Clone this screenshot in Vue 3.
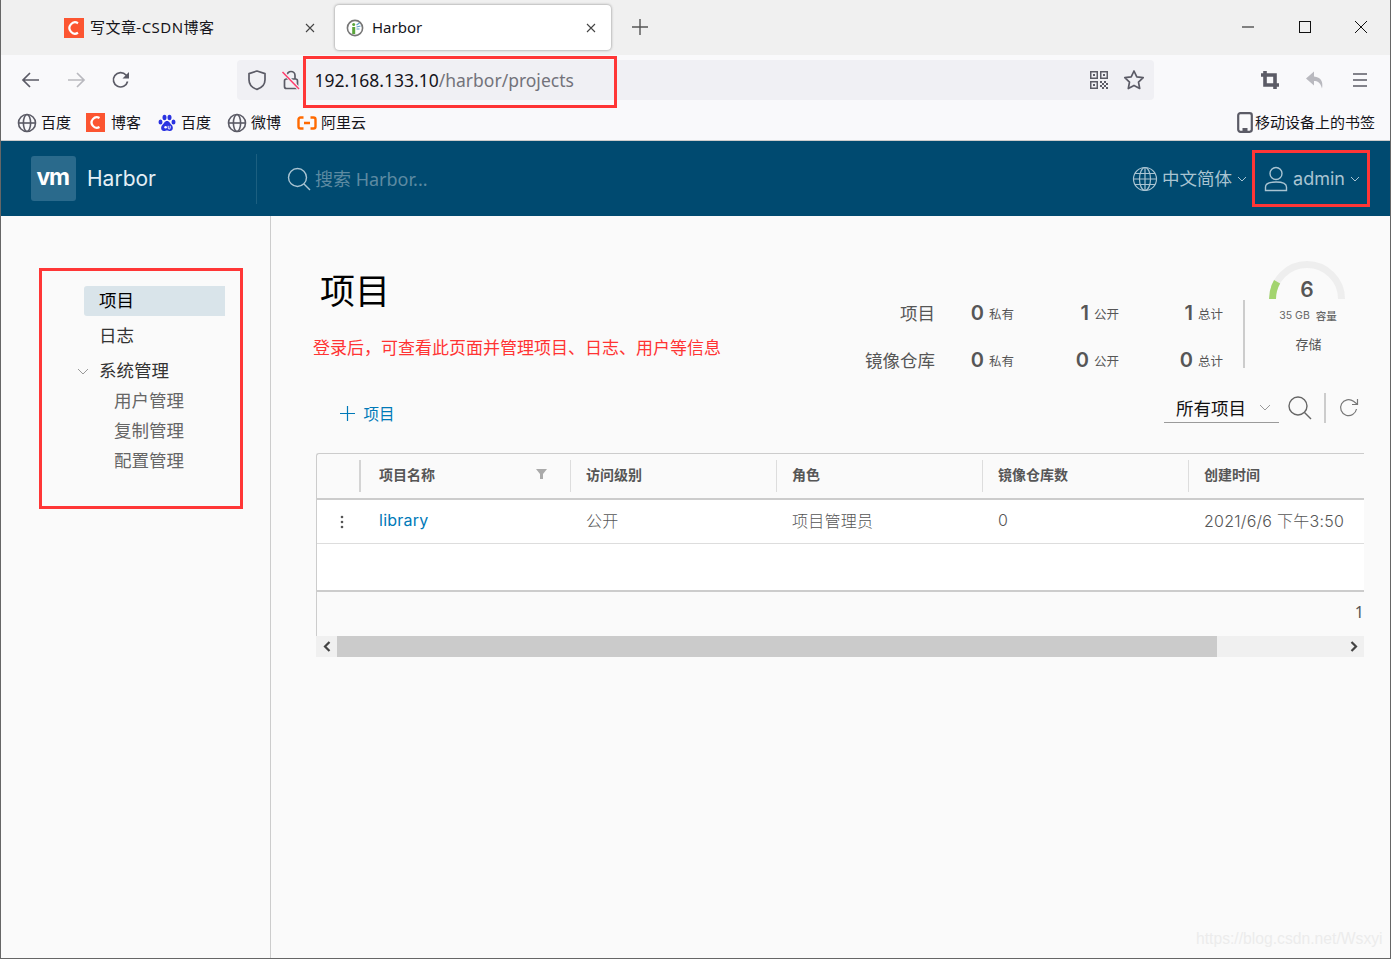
<script setup>
const bookmarks = [
  { icon: 'globe', label: '百度' },
  { icon: 'csdn', label: '博客' },
  { icon: 'paw', label: '百度' },
  { icon: 'globe', label: '微博' },
  { icon: 'ali', label: '阿里云' }
]

const stats = [
  { label: '项目', values: ['0', '1', '1'] },
  { label: '镜像仓库', values: ['0', '0', '0'] }
]
const statNames = ['私有', '公开', '总计']

const columns = ['项目名称', '访问级别', '角色', '镜像仓库数', '创建时间']
const row = ['library', '公开', '项目管理员', '0', '2021/6/6 下午3:50']
</script>

<template>
  <div class="window">
    <!-- browser chrome -->
    <div class="tabstrip">
      <div class="tab">
        <svg class="fav" width="20" height="20" viewBox="0 0 20 20">
          <rect width="20" height="20" fill="#fc5531" />
          <path d="M14 5.2a5.6 5.6 0 1 0 0 9.6" fill="none" stroke="#fff" stroke-width="2.2" />
        </svg>
        <span class="tab-title wide">写文章-CSDN博客</span>
        <svg class="tab-x" width="12" height="12" viewBox="0 0 12 12"><path d="M2 2l8 8M10 2l-8 8" stroke="#444" stroke-width="1.1" /></svg>
      </div>
      <div class="tab active">
        <svg class="fav" width="18" height="18" viewBox="0 0 18 18">
          <circle cx="9" cy="9" r="7.6" fill="#fff" stroke="#777" stroke-width="1.6" />
          <rect x="6.2" y="8" width="3" height="7" fill="#5aa63c" />
          <circle cx="7.7" cy="5.6" r="1.5" fill="#5aa63c" />
          <path d="M10.5 6l3-2M10.5 8l4-1M10.5 10l3 0" stroke="#5a9fc8" stroke-width="1.1" />
        </svg>
        <span class="tab-title">Harbor</span>
        <svg class="tab-x" width="12" height="12" viewBox="0 0 12 12"><path d="M2 2l8 8M10 2l-8 8" stroke="#444" stroke-width="1.1" /></svg>
      </div>
      <svg class="new-tab" width="16" height="16" viewBox="0 0 16 16"><path d="M8 0v16M0 8h16" stroke="#555" stroke-width="1.4" /></svg>
      <div class="win-btns">
        <span class="win-btn"><svg width="14" height="14" viewBox="0 0 14 14"><path d="M1 7h12" stroke="#111" stroke-width="1" /></svg></span>
        <span class="win-btn"><svg width="14" height="14" viewBox="0 0 14 14"><rect x="1.5" y="1.5" width="11" height="11" fill="none" stroke="#111" stroke-width="1" /></svg></span>
        <span class="win-btn"><svg width="14" height="14" viewBox="0 0 14 14"><path d="M1 1l12 12M13 1L1 13" stroke="#111" stroke-width="1" /></svg></span>
      </div>
    </div>

    <div class="toolbar">
      <span class="tool"><svg width="20" height="20" viewBox="0 0 20 20"><path d="M18 10H2.5M9 3l-7 7 7 7" fill="none" stroke="#5b5b66" stroke-width="1.7" /></svg></span>
      <span class="tool"><svg width="20" height="20" viewBox="0 0 20 20"><path d="M2 10h15.5M11 3l7 7-7 7" fill="none" stroke="#b9b9bf" stroke-width="1.7" /></svg></span>
      <span class="tool"><svg width="20" height="20" viewBox="0 0 20 20"><path d="M16.6 11.5A7.2 7.2 0 1 1 15 5l2 2.2" fill="none" stroke="#5b5b66" stroke-width="1.7" /><path d="M18 2v6.5h-6.5z" fill="#5b5b66" /></svg></span>
      <div class="urlbar">
        <span class="url-ico"><svg width="20" height="22" viewBox="0 0 20 22"><path d="M10 2l8 2.6v6.2c0 5-3.6 8.2-8 9.6-4.4-1.4-8-4.6-8-9.6V4.6z" fill="none" stroke="#5b5b66" stroke-width="1.7" stroke-linejoin="round" /></svg></span>
        <span class="url-ico lock">
          <svg width="20" height="22" viewBox="0 0 20 22">
            <path d="M6 10V6.500a4 4 0 0 1 8 0V10" fill="none" stroke="#5b5b66" stroke-width="1.7" />
            <rect x="3.5" y="10" width="13" height="9.5" rx="2" fill="none" stroke="#5b5b66" stroke-width="1.7" />
            <path d="M2 3l16 17" stroke="#f0f0f4" stroke-width="3.4" />
            <path d="M1.500 3l16.500 17" stroke="#ff3b6b" stroke-width="1.5" />
          </svg>
        </span>
        <span class="url"><b>192.168.133.10</b>/harbor/projects</span>
        <span class="url-ico qr">
          <svg width="20" height="20" viewBox="0 0 20 20" fill="#5b5b66">
            <path d="M1 1h8v8H1zM2.500 2.500v5h5v-5zM11 1h8v8h-8zM12.500 2.500v5h5v-5zM1 11h8v8H1zM2.500 12.500v5h5v-5z" fill-rule="evenodd" />
            <rect x="4" y="4" width="2" height="2" /><rect x="14" y="4" width="2" height="2" /><rect x="4" y="14" width="2" height="2" />
            <rect x="11" y="11" width="2" height="2" /><rect x="15" y="11" width="2" height="2" /><rect x="13" y="13" width="2" height="2" /><rect x="17" y="13" width="2" height="2" />
            <rect x="11" y="15" width="2" height="2" /><rect x="15" y="15" width="2" height="2" /><rect x="13" y="17" width="2" height="2" /><rect x="17" y="17" width="2" height="2" />
          </svg>
        </span>
        <span class="url-ico star"><svg width="22" height="22" viewBox="0 0 22 22"><path d="M11 2l2.800 5.900 6.400.8-4.700 4.400 1.200 6.400L11 16.400l-5.700 3.100 1.200-6.400-4.700-4.400 6.400-.8z" fill="none" stroke="#5b5b66" stroke-width="1.7" stroke-linejoin="round" /></svg></span>
      </div>
      <span class="tool crop"><svg width="20" height="20" viewBox="0 0 20 20"><path d="M5 1v14h14M1 5h14v14" fill="none" stroke="#5b5b66" stroke-width="3.6" /></svg></span>
      <span class="tool"><svg width="20" height="20" viewBox="0 0 20 20"><path d="M9 1.500L1 8.500 9 15.500v-4.500c3.500 0 6.500 1.500 8 7.500 1.500-6.500-1-11.500-8-12z" fill="#b9b9bf" /></svg></span>
      <span class="tool"><svg width="20" height="20" viewBox="0 0 20 20"><path d="M3 4h14M3 10h14M3 16h14" stroke="#5b5b66" stroke-width="1.7" /></svg></span>
    </div>

    <div class="bookmarks">
      <span v-for="(b, i) in bookmarks" :key="i" class="bm">
        <svg v-if="b.icon === 'globe'" width="20" height="20" viewBox="0 0 20 20" fill="none" stroke="#5b5b66" stroke-width="1.6">
          <circle cx="10" cy="10" r="8.5" /><ellipse cx="10" cy="10" rx="3.6" ry="8.5" /><path d="M1.500 10h17" />
        </svg>
        <svg v-else-if="b.icon === 'csdn'" class="bm-csdn" width="19" height="19" viewBox="0 0 19 19">
          <rect width="19" height="19" fill="#fc5531" />
          <path d="M13.500 5a5.200 5.200 0 1 0 0 9" fill="none" stroke="#fff" stroke-width="2.2" />
        </svg>
        <svg v-else-if="b.icon === 'paw'" width="20" height="20" viewBox="0 0 20 20" fill="#2932e1">
          <ellipse cx="3.500" cy="9" rx="2" ry="2.6" /><ellipse cx="7.500" cy="4.500" rx="2" ry="2.8" /><ellipse cx="12.500" cy="4.500" rx="2" ry="2.8" /><ellipse cx="16.500" cy="9" rx="2" ry="2.6" />
          <path d="M10 8c-2.500 0-3 2.500-4.500 3.800C3.500 13.500 3.500 18 7 18c1.200 0 2-.5 3-.5s1.800.5 3 .5c3.500 0 3.500-4.500 1.500-6.200C13 10.500 12.500 8 10 8z" />
          <circle cx="8.600" cy="14.200" r="1.300" fill="#fff" /><path d="M11.200 12.800v2.200a1 1 0 0 0 2 0v-2.200" fill="none" stroke="#fff" stroke-width=".9" />
        </svg>
        <svg v-else width="20" height="20" viewBox="0 0 20 20" fill="none" stroke="#ff6a00" stroke-width="2.4">
          <path d="M6.500 4.500H3.500a2 2 0 0 0-2 2v7a2 2 0 0 0 2 2h3M13.500 4.500h3a2 2 0 0 1 2 2v7a2 2 0 0 1-2 2h-3M7 10h6" />
        </svg>
        <span class="bm-text">{{ b.label }}</span>
      </span>
      <span class="bm mobile">
        <svg width="16" height="21" viewBox="0 0 16 21"><rect x="1.2" y="1.2" width="13.6" height="18.6" rx="2.2" fill="none" stroke="#5b5b66" stroke-width="2.2" /><rect x="5.500" y="16" width="5" height="3" fill="#5b5b66" /></svg>
        <span class="bm-text">移动设备上的书签</span>
      </span>
    </div>

    <!-- harbor header -->
    <header class="hdr">
      <div class="brand">
        <span class="logo">vm</span>
        <span class="brand-name">Harbor</span>
      </div>
      <div class="hdr-search">
        <svg width="24" height="24" viewBox="0 0 24 24" fill="none" stroke="#a9c4d2" stroke-width="1.4"><circle cx="10.500" cy="10.500" r="9" /><path d="M17 17l6 6" /></svg>
        <span class="up">搜索 Harbor...</span>
      </div>
      <div class="hdr-right">
        <svg width="26" height="26" viewBox="0 0 26 26" fill="none" stroke="#a9c4d2" stroke-width="1.2"><circle cx="13" cy="13" r="11.500" /><ellipse cx="13" cy="13" rx="5.500" ry="11.500" /><path d="M13 1.500v23M1.500 13h23M3 7.500h20M3 18.500h20" /></svg>
        <span class="hdr-lang up">中文简体</span>
        <svg class="hdr-chev" width="10" height="6" viewBox="0 0 10 6"><path d="M1 1l4 4 4-4" fill="none" stroke="#a9c4d2" stroke-width="1" /></svg>
        <svg class="hdr-user" width="24" height="26" viewBox="0 0 24 26" fill="none" stroke="#a9c4d2" stroke-width="1.4"><circle cx="12" cy="7.500" r="6" /><path d="M1.500 24.500v-3.500c0-3 3.500-5 10.500-5s10.500 2 10.500 5v3.500z" /></svg>
        <span class="hdr-name">admin</span>
        <svg class="hdr-chev" width="10" height="6" viewBox="0 0 10 6"><path d="M1 1l4 4 4-4" fill="none" stroke="#a9c4d2" stroke-width="1" /></svg>
      </div>
    </header>

    <div class="body">
      <aside class="side">
        <div class="nav-item on">项目</div>
        <div class="nav-item log">日志</div>
        <div class="nav-item group">
          <svg width="12" height="8" viewBox="0 0 12 8"><path d="M1 1l5 5 5-5" fill="none" stroke="#999" stroke-width="1" /></svg>
          系统管理
        </div>
        <div class="nav-sub">用户管理</div>
        <div class="nav-sub">复制管理</div>
        <div class="nav-sub">配置管理</div>
      </aside>

      <main class="main">
        <div class="head">
          <div class="head-left">
            <h1>项目</h1>
            <p class="note">登录后，可查看此页面并管理项目、日志、用户等信息</p>
          </div>
          <div class="stats">
            <template v-for="s in stats" :key="s.label">
              <span class="stat-label">{{ s.label }}</span>
              <span v-for="(v, i) in s.values" :key="i" class="stat-val">
                <b>{{ v }}</b><small>{{ statNames[i] }}</small>
              </span>
            </template>
          </div>
          <div class="storage">
            <div class="gauge">
              <svg width="76" height="38" viewBox="0 0 76 38" fill="none" stroke-width="7">
                <path d="M3.500 38a34.500 34.500 0 0 1 69 0" stroke="#eee" />
                <path d="M3.500 38a34.500 34.500 0 0 1 4.600-17.200" stroke="#a3d46f" />
              </svg>
              <b>6</b>
            </div>
            <div class="cap"><span>35 GB</span><em>容量</em></div>
            <div class="cap2">存储</div>
          </div>
        </div>

        <div class="actions">
          <span class="add">
            <svg width="15" height="15" viewBox="0 0 15 15"><path d="M7.500 0v15M0 7.500h15" stroke="#0079b8" stroke-width="1.2" /></svg>
            项目
          </span>
          <div class="filter">
            <span class="select">
              所有项目
              <svg width="12" height="7" viewBox="0 0 12 7"><path d="M1 1l5 5 5-5" fill="none" stroke="#999" stroke-width="1" /></svg>
            </span>
            <svg class="find" width="24" height="24" viewBox="0 0 24 24" fill="none" stroke="#666" stroke-width="1.4"><circle cx="10" cy="10" r="9" /><path d="M16.500 16.500l6.500 6.500" /></svg>
            <span class="vline"></span>
            <svg class="refresh" width="20" height="20" viewBox="0 0 20 20" fill="none" stroke="#777" stroke-width="1.2"><path d="M17.500 11A8 8 0 1 1 14.500 3.300L18 6" /><path d="M18.500 1v5.500H13" /></svg>
          </div>
        </div>

        <section class="grid">
          <div class="grid-head">
            <div class="th first"></div>
            <div v-for="(c, i) in columns" :key="c" class="th" :class="{ name: i === 0 }">
              <span>{{ c }}</span>
              <svg v-if="i === 0" width="11" height="10" viewBox="0 0 11 10"><path d="M0 0h11L7 5v5H4V5z" fill="#aaa" /></svg>
            </div>
          </div>
          <div class="grid-row">
            <div class="td first"><svg width="4" height="14" viewBox="0 0 4 14" fill="#555"><circle cx="2" cy="2" r="1.300" /><circle cx="2" cy="7" r="1.300" /><circle cx="2" cy="12" r="1.300" /></svg></div>
            <div v-for="(c, i) in row" :key="i" class="td" :class="{ name: i === 0, link: i === 0 }">{{ c }}</div>
          </div>
          <div class="grid-empty"></div>
          <div class="grid-foot"><span>1</span></div>
        </section>
        <div class="hscroll">
          <span class="sbtn"><svg width="8" height="11" viewBox="0 0 8 11"><path d="M6.500 1L2 5.500 6.500 10" fill="none" stroke="#444" stroke-width="2.2" /></svg></span>
          <span class="thumb"></span>
          <span class="sbtn end"><svg width="8" height="11" viewBox="0 0 8 11"><path d="M1.500 1L6 5.500 1.500 10" fill="none" stroke="#444" stroke-width="2.2" /></svg></span>
        </div>
      </main>
    </div>

    <!-- red marks drawn over the screenshot -->
    <span class="mark m-url"></span>
    <span class="mark m-user"></span>
    <span class="mark m-side"></span>
    <span class="watermark">https://blog.csdn.net/Wsxyi</span>
  </div>
</template>

<style>
html, body { margin: 0; padding: 0; background: #fafafa; }
</style>

<style scoped>
.window {
  position: relative;
  box-sizing: border-box;
  width: 1391px;
  height: 959px;
  overflow: hidden;
  display: flex;
  flex-direction: column;
  border: 1px solid #666;
  border-top: none;
  background: #fafafa;
  font-family: "Noto Sans", "Noto Sans CJK SC", sans-serif;
  color: #15141a;
}
svg { display: block; flex: none; }
.up { margin-top: -2px; }

.tabstrip { height: 55px; flex: none; display: flex; align-items: flex-start; background: #f0f0f0; }
.tab {
  box-sizing: border-box;
  width: 272px;
  height: 45px;
  margin: 5px 0 0 62px;
  padding: 0 19px 0 1px;
  display: flex;
  align-items: center;
  font-size: 15px;
}
.tab-title { margin: -2px 0 0 6px; }
.tab-title.wide { letter-spacing: .45px; }
.tab-x { margin-left: auto; }
.tab.active {
  width: 276px;
  margin-left: 0;
  padding: 0 14px 0 11px;
  background: #fff;
  border-radius: 4px;
  box-shadow: 0 0 3px rgba(0, 0, 0, .45);
}
.tab.active .tab-title { margin-left: 8px; }
.new-tab { margin: 19px 0 0 21px; }
.win-btns { margin: 0 .5px 0 auto; display: flex; }
.win-btn { width: 56.5px; height: 54px; display: flex; align-items: center; justify-content: center; }

.toolbar { height: 50px; flex: none; padding-left: 7px; display: flex; align-items: center; background: #f9f9fb; }
.tool { width: 45px; display: flex; justify-content: center; }
.tool.crop { margin-left: 93px; }
.urlbar {
  box-sizing: border-box;
  width: 917px;
  height: 40px;
  margin-left: 94px;
  padding: 0 8px;
  display: flex;
  align-items: center;
  background: #f0f0f4;
  border-radius: 4px;
}
.url-ico { width: 24px; display: flex; justify-content: center; }
.url-ico.lock { margin-left: 10px; }
.url-ico.qr { margin-left: auto; }
.url-ico.star { margin-left: 11px; }
.url { margin-left: 11.5px; font-size: 17.5px; color: #73737b; }
.url b { font-weight: 400; color: #15141a; }

.bookmarks { height: 35px; flex: none; padding-left: 16px; display: flex; align-items: center; gap: 16px; background: #f9f9fb; border-bottom: 1px solid #ccc; font-size: 15px; }
.bm { display: flex; align-items: center; gap: 4px; }
.bm-text { margin-top: -2px; }
.bm-csdn { margin: -1px 2px 0 -1px; }
.bm.mobile { margin-left: auto; margin-right: 15px; gap: 2px; }

.hdr { height: 75px; flex: none; padding-left: 30px; display: flex; align-items: center; background: #004a70; }
.brand { box-sizing: border-box; width: 226px; height: 50px; display: flex; align-items: center; border-right: 1px solid #1c5f80; }
.logo {
  width: 45px;
  height: 45px;
  box-sizing: border-box;
  padding: 0 2px 4px 0;
  display: flex;
  align-items: center;
  justify-content: center;
  background: #2a6a8c;
  border-radius: 3px;
  color: #fff;
  font-family: Inter, sans-serif;
  font-size: 23px;
  font-weight: 700;
  letter-spacing: -1.5px;
}
.brand-name { margin: 0 0 0 11px; font-family: Inter, sans-serif; font-size: 21px; color: #e4eff5; }
.hdr-search { margin-left: 30px; display: flex; align-items: center; gap: 4px; font-size: 18px; color: #5d8aa2; }
.hdr-right { margin-left: auto; display: flex; align-items: center; color: #a9c4d2; font-size: 17.5px; }
.hdr-lang { margin-left: 4px; }
.hdr-chev { margin-left: 5px; }
.hdr-user { margin-left: 17px; }
.hdr-name { margin-left: 5px; font-family: Inter, sans-serif; font-size: 18px; }
.hdr-right > :last-child { margin-right: 30px; }

.body { flex: 1; min-height: 0; display: flex; }
.side { box-sizing: border-box; width: 270px; flex: none; padding: 70px 45px 0 83px; border-right: 1px solid #ccc; font-size: 17.5px; }
.nav-item { height: 30px; line-height: 28px; padding-left: 15px; color: #333; }
.nav-item.on { background: #d9e4ea; border-radius: 3px 0 0 3px; color: #000; }
.nav-item.log { margin-top: 5px; }
.nav-item.group { position: relative; margin-top: 5px; }
.nav-item.group svg { position: absolute; left: -7px; top: 12px; }
.nav-sub { height: 30px; line-height: 28px; padding-left: 30px; color: #666; }

.main { flex: 1; min-width: 0; padding: 45px 26px 0 45px; }
.head { height: 131px; display: flex; align-items: flex-start; }
.head-left { flex: 1; }
h1 { margin: 6px 0 0 4px; font-size: 35px; line-height: 48px; font-weight: 400; color: #000; }
.note { margin: 21px 0 0 -3px; font-size: 17px; line-height: 24px; color: #ff3333; }
.stats {
  width: 359px;
  margin-top: 28px;
  display: grid;
  grid-template-columns: 70px 79px 105px 104px;
  grid-auto-rows: 47px;
  align-items: center;
}
.stat-label { font-size: 17.5px; color: #565656; text-align: right; white-space: nowrap; }
.stat-val { display: flex; justify-content: flex-end; align-items: center; gap: 5px; color: #565656; }
.stat-val b { font-family: Inter, sans-serif; font-size: 20px; font-weight: 600; }
.stat-val small { font-size: 12.5px; margin-top: 2px; }
.storage {
  position: relative;
  box-sizing: border-box;
  width: 121px;
  margin-left: 19px;
  padding-left: 7px;
  display: flex;
  flex-direction: column;
  align-items: center;
}
.storage::before { content: ""; position: absolute; left: 0; top: 39px; width: 2px; height: 68px; background: #ccc; }
.gauge { position: relative; }
.gauge b { position: absolute; left: 0; right: 0; top: 15px; text-align: center; font-family: Inter, sans-serif; font-size: 21px; line-height: 28px; font-weight: 600; color: #565656; }
.cap { margin: 9px 0 0 2px; display: flex; gap: 6px; font-size: 10.5px; line-height: 16px; color: #666; font-family: Inter, sans-serif; white-space: nowrap; }
.cap em { font-style: normal; font-family: "Noto Sans CJK SC", sans-serif; font-weight: 500; }
.cap2 { margin: 12px 0 0 3px; font-size: 13px; line-height: 16px; color: #565656; }

.actions { height: 32px; display: flex; align-items: center; justify-content: space-between; }
.add { margin-left: 24px; margin-top: 10px; display: flex; align-items: center; gap: 8.5px; color: #0079b8; font-size: 15.5px; }
.filter { display: flex; align-items: center; }
.select { box-sizing: border-box; width: 115px; height: 29px; padding-left: 12px; display: flex; align-items: center; gap: 13px; border-bottom: 1px solid #9a9a9a; font-size: 17.5px; color: #111; }
.find { margin-left: 9px; }
.vline { width: 2px; height: 30px; margin-left: 12px; background: #ccc; }
.refresh { margin: 0 5px 0 13px; }

.grid { margin-top: 29px; border: 1px solid #ccc; border-right: none; border-bottom: none; border-radius: 3px 0 0 0; }
.grid-head, .grid-row { display: grid; grid-template-columns: 42px 211px 206px 206px 206px 1fr; }
.grid-head { height: 44px; border-bottom: 2px solid #ccc; }
.th { display: flex; align-items: center; margin: 6px 0; padding: 0 0 5px 15px; border-left: 1px solid #ddd; font-size: 14px; font-weight: 700; color: #565656; white-space: nowrap; }
.th.first { border-left: none; }
.th.name { padding: 0 23px 5px 18px; border-left: 2px solid #d4d4d4; justify-content: space-between; }
.grid-row { height: 43px; background: #fff; border-bottom: 1px solid #ddd; }
.td { display: flex; align-items: center; padding: 0 0 3px 16px; font-size: 16px; letter-spacing: .25px; font-family: Inter, "Noto Sans CJK SC", sans-serif; font-weight: 300; color: #565656; white-space: nowrap; }
.td.first { padding: 0 0 0 23px; }
.td.name { padding-left: 20px; }
.td.link { color: #0079b8; font-weight: 400; }
.grid-empty { height: 46px; background: #fff; border-bottom: 2px solid #ccc; }
.grid-foot { height: 44px; font-size: 16px; line-height: 40px; color: #565656; text-align: right; }

.hscroll { height: 21px; display: flex; background: #f0f0f0; }
.sbtn { width: 21px; display: flex; align-items: center; justify-content: center; }
.sbtn.end { margin-left: auto; width: 20px; }
.thumb { width: 880px; background: #cbcbcb; }

.mark { position: absolute; box-sizing: border-box; border: 3px solid #ff3636; pointer-events: none; }
.m-url { left: 302px; top: 56px; width: 314px; height: 52px; }
.m-user { left: 1251px; top: 150px; width: 118px; height: 57px; }
.m-side { left: 38px; top: 268px; width: 204px; height: 241px; }
.watermark { position: absolute; left: 1195px; top: 930px; font-family: "Liberation Sans", sans-serif; font-size: 15.7px; color: #ececec; white-space: nowrap; }
</style>
